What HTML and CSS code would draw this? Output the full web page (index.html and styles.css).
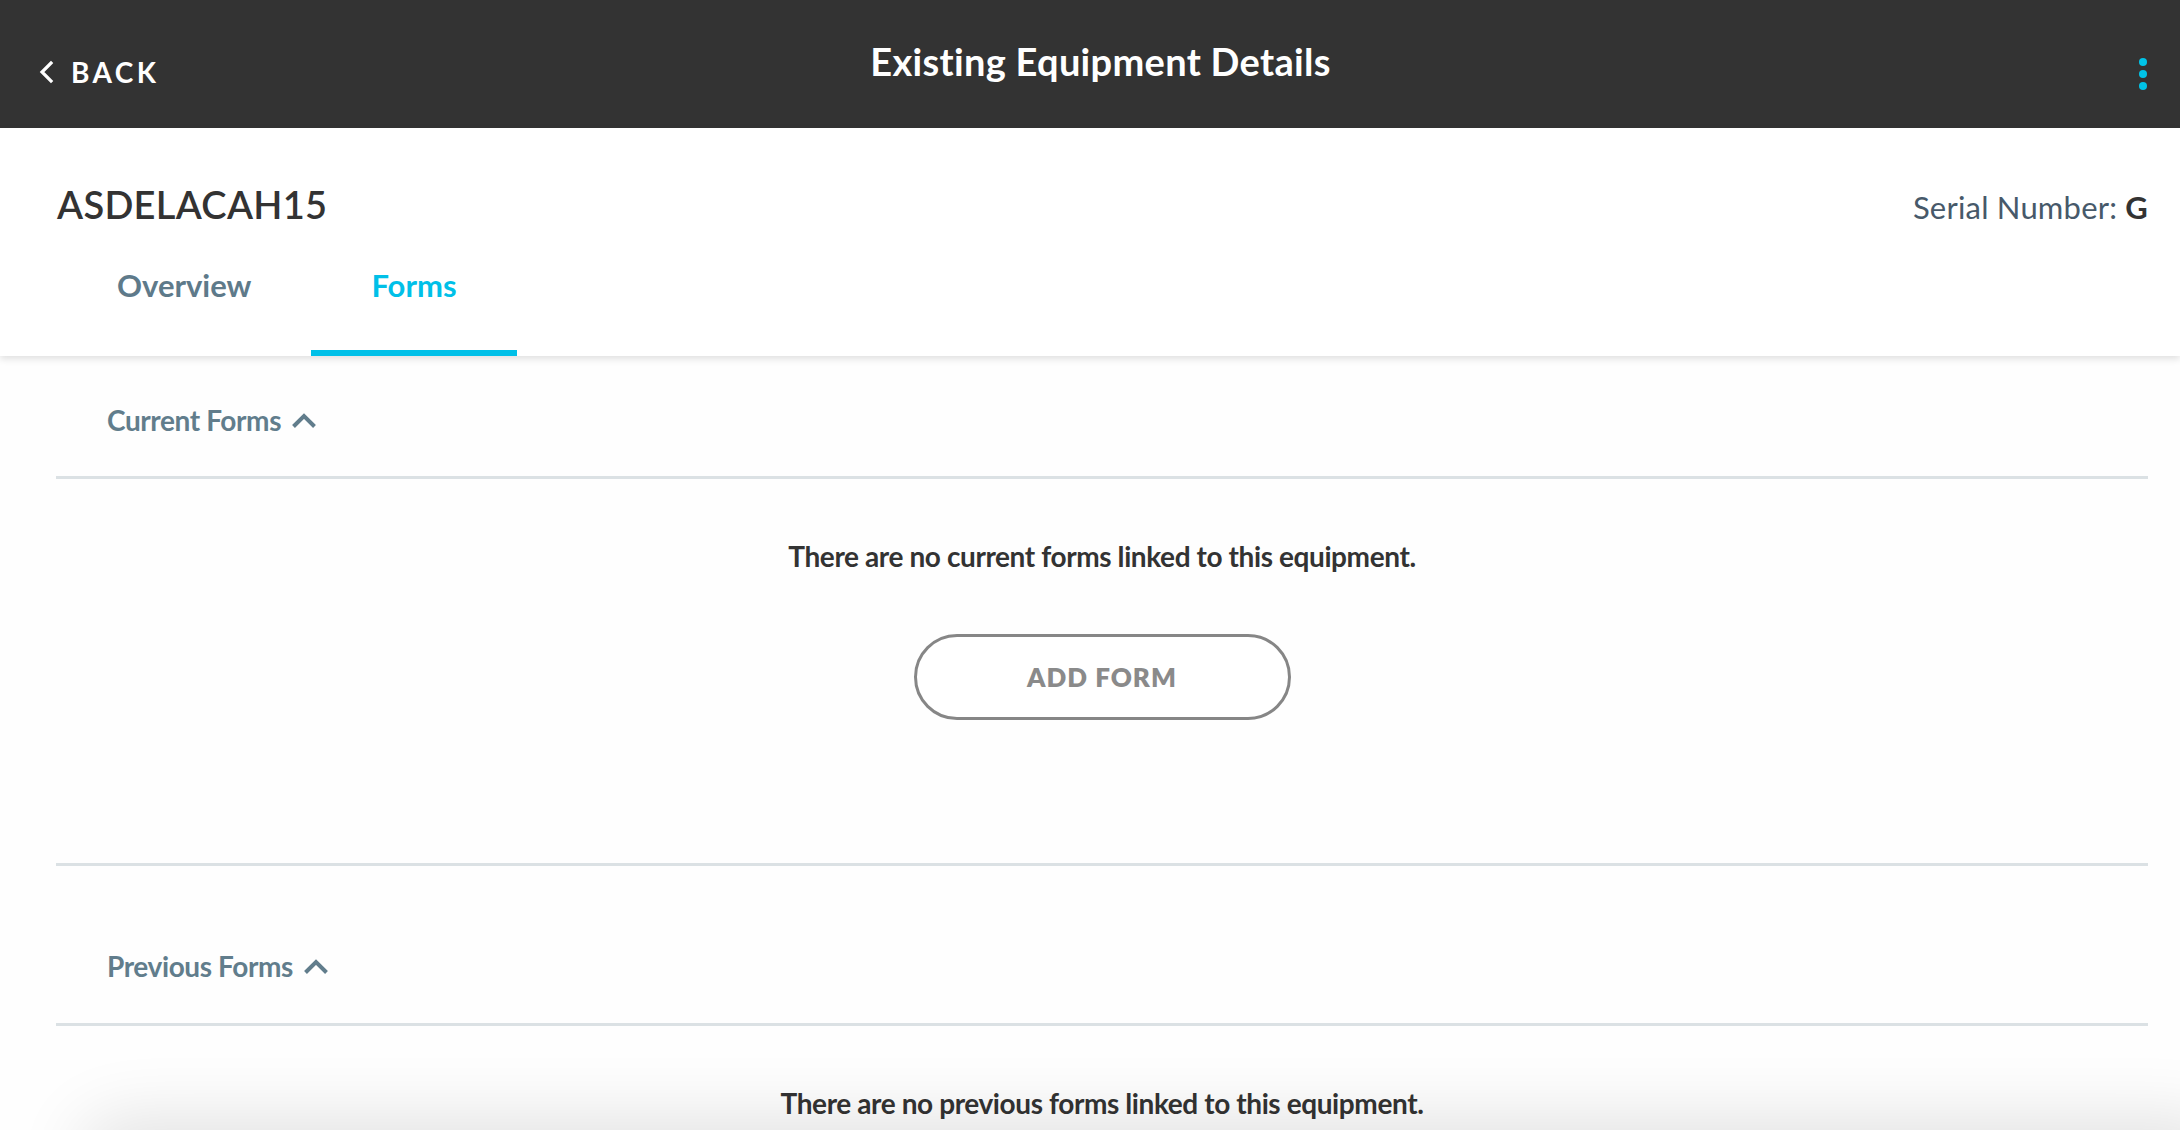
FILE: index.html
```html
<!DOCTYPE html>
<html lang="en">
<head>
<meta charset="utf-8">
<title>Existing Equipment Details</title>
<link rel="stylesheet" href="styles.css">
</head>
<body>
<header class="topbar">
  <a class="back" href="#">
    <svg class="back-icon" viewBox="0 0 16 24" width="16" height="24" aria-hidden="true"><path d="M13 3 L4 12 L13 21" fill="none" stroke="#fff" stroke-width="3.2" stroke-linecap="square"/></svg>
    <span>BACK</span>
  </a>
  <h1 class="title">Existing Equipment Details</h1>
  <button class="more" aria-label="More">
    <span class="dot"></span><span class="dot"></span><span class="dot"></span>
  </button>
</header>

<section class="equip-head">
  <div class="name-row">
    <div class="equip-name">ASDELACAH15</div>
    <div class="serial"><span class="serial-label">Serial Number:</span> <strong>G</strong></div>
  </div>
  <nav class="tabs">
    <a class="tab" href="#">Overview</a>
    <a class="tab active" href="#">Forms</a>
  </nav>
</section>

<main class="content">
  <div class="section-head first">
    <span>Current Forms</span>
    <svg class="caret" viewBox="0 0 26 17" width="26" height="17" aria-hidden="true"><path d="M2.5 14.5 L13 4 L23.5 14.5" fill="none" stroke="#617d8c" stroke-width="4"/></svg>
  </div>
  <div class="section-body current">
    <p class="empty">There are no current forms linked to this equipment.</p>
    <button class="add-btn">ADD FORM</button>
  </div>
  <div class="section-head second">
    <span>Previous Forms</span>
    <svg class="caret" viewBox="0 0 26 17" width="26" height="17" aria-hidden="true"><path d="M2.5 14.5 L13 4 L23.5 14.5" fill="none" stroke="#617d8c" stroke-width="4"/></svg>
  </div>
  <div class="section-body previous">
    <p class="empty">There are no previous forms linked to this equipment.</p>
  </div>
</main>
<div class="bottom-shade"></div>
</body>
</html>
```

FILE: styles.css
```css
* { box-sizing: border-box; }
html, body { margin: 0; padding: 0; }
body {
  background: #fefefe;
  font-family: "Lato", "Liberation Sans", sans-serif;
  width: 2180px;
  height: 1130px;
  overflow: hidden;
}

.topbar {
  height: 128px;
  background: #333333;
  display: grid;
  grid-template-columns: 1fr auto 1fr;
  align-items: center;
  padding: 0 33px 0 38px;
}
.back {
  display: flex;
  align-items: center;
  gap: 17px;
  color: #fff;
  text-decoration: none;
  font-weight: 700;
  font-size: 28px;
  letter-spacing: 3.4px;
  padding-top: 16px;
  justify-self: start;
}
.back-icon { display: block; }
.title {
  margin: 0 0 0 16px;
  color: #fff;
  font-size: 38px;
  font-weight: 700;
  letter-spacing: 0.3px;
  padding-bottom: 6px;
}
.more {
  justify-self: end;
  background: none;
  border: 0;
  padding: 20px 0 0 0;
  display: flex;
  flex-direction: column;
  gap: 4px;
}
.dot {
  width: 8px;
  height: 8px;
  border-radius: 50%;
  background: #00c4e8;
  display: block;
}

.equip-head {
  background: #fff;
  padding: 53px 32px 0 57px;
  box-shadow: 0 3px 7px rgba(0, 0, 0, 0.12);
  position: relative;
}
.name-row {
  display: flex;
  justify-content: space-between;
  align-items: center;
  height: 46px;
}
.equip-name {
  font-size: 38px;
  font-weight: 600;
  color: #333;
  letter-spacing: 0.3px;
}
.serial {
  font-size: 31px;
  color: #47596a;
  padding-top: 6px;
  letter-spacing: 0.2px;
}
.serial strong { color: #333; font-weight: 700; }
.tabs {
  display: flex;
  margin-top: 3px;
}
.tab {
  display: block;
  height: 126px;
  padding: 39px 60px 0;
  line-height: 32px;
  font-size: 31px;
  font-weight: 700;
  color: #5e7a8a;
  text-decoration: none;
  border-bottom: 6px solid transparent;
}
.tab.active {
  color: #00c0e8;
  border-bottom-color: #00c0e8;
}

.content {
  margin: 0 32px 0 56px;
}
.section-head {
  display: flex;
  align-items: center;
  gap: 10px;
  padding-left: 51px;
  color: #617d8c;
  font-size: 28px;
  font-weight: 700;
  letter-spacing: -0.4px;
  border-bottom: 3px solid #dbe1e4;
}
.section-head.first { height: 123px; padding-top: 8px; }
.section-head.second { height: 160px; padding-top: 42px; }
.caret { display: block; margin-top: 1px; }

.section-body {
  display: flex;
  flex-direction: column;
  align-items: center;
  border-bottom: 3px solid #dbe1e4;
}
.section-body.previous { border-bottom: 0; }
.empty {
  margin: 0;
  padding-top: 57px;
  line-height: 40px;
  font-size: 28px;
  font-weight: 700;
  color: #333;
  letter-spacing: -0.4px;
}
.section-body.current { height: 387px; }
.add-btn {
  margin-top: 58px;
  width: 377px;
  height: 86px;
  border: 3.5px solid #868686;
  border-radius: 43px;
  background: #fff;
  color: #8a8a8a;
  font-family: "Lato", "Liberation Sans", sans-serif;
  font-size: 26px;
  font-weight: 800;
  letter-spacing: 1px;
}

.bottom-shade {
  position: fixed;
  left: 90px;
  right: -40px;
  bottom: -60px;
  height: 60px;
  border-radius: 40px;
  box-shadow: 0 0 70px 10px rgba(0, 0, 0, 0.12);
}
```
